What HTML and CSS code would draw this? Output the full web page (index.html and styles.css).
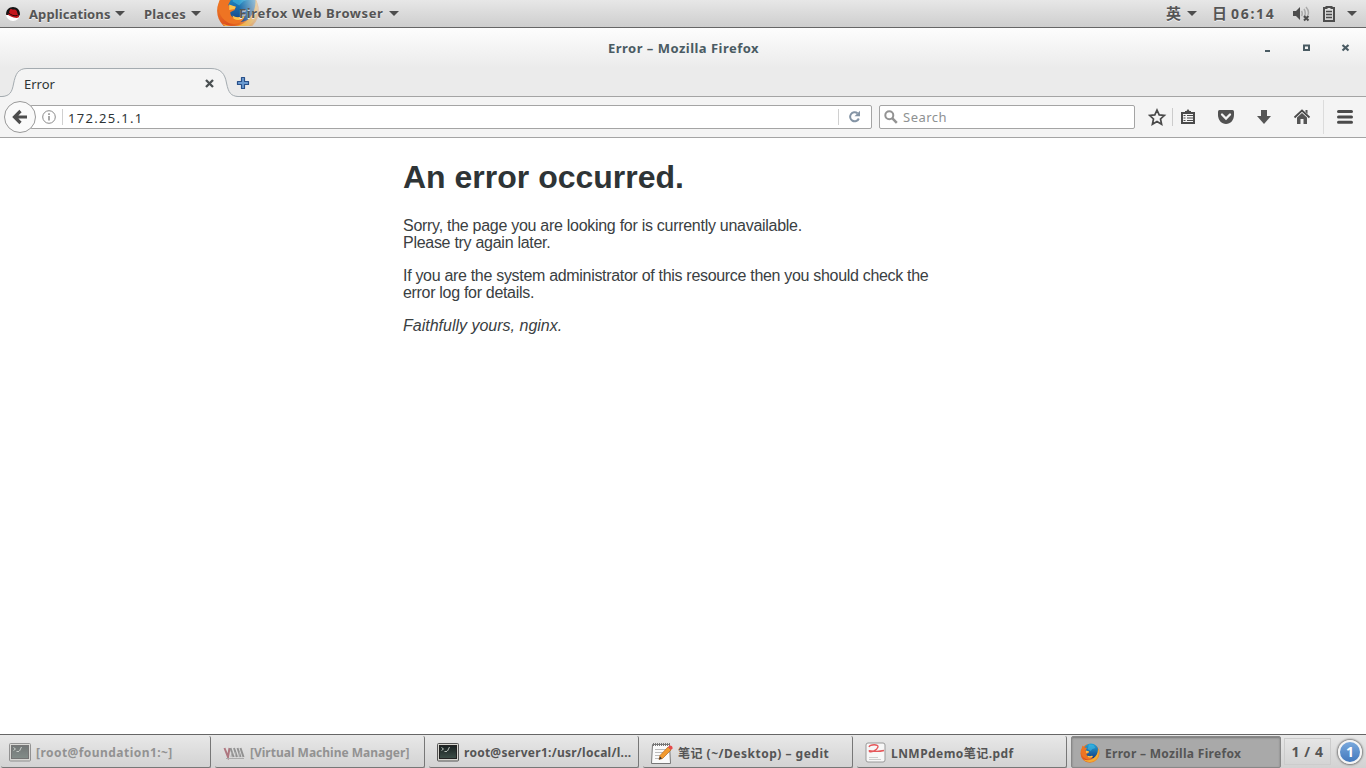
FILE: index.html
```
<!DOCTYPE html>
<html lang="en">
<head>
    <meta charset="UTF-8">
    <title>Error</title>
    <link rel="stylesheet" href="styles.css">
</head>
<body>

    <!-- Gradients shared by the icons -->
    <svg class="defs" width="0" height="0">
        <defs>
            <linearGradient id="fox" x1="0" y1="0" x2="1" y2="1">
                <stop offset="0" stop-color="#f08a2c"/>
                <stop offset=".55" stop-color="#dd4f1c"/>
                <stop offset="1" stop-color="#f6b93b"/>
            </linearGradient>
            <linearGradient id="globe" x1="0" y1="0" x2="0" y2="1">
                <stop offset="0" stop-color="#1fa5dc"/>
                <stop offset="1" stop-color="#173f82"/>
            </linearGradient>
            <linearGradient id="screen" x1="0" y1="0" x2="0" y2="1">
                <stop offset="0" stop-color="#182020"/>
                <stop offset="1" stop-color="#3d4f48"/>
            </linearGradient>
            <symbol id="firefox" viewBox="0 0 20 20">
                <circle cx="10" cy="10.300" r="9.500" fill="url(#fox)"/>
                <circle cx="11" cy="8" r="7.400" fill="url(#globe)"/>
                <path d="M9 1.500l4.500.500 2 3-3 1-2 2-3-2z" fill="#47c3ea" opacity=".5"/>
                <path d="M1 8l1.500-5.500L4 4.500l3 .300-1.500 3L9 8.500 8.500 10l-2 1c0 2.500 2.500 3 5 2l1.500 0c-1 3-4 4-7 3-3-1.500-5-4-5-8z" fill="#ee7423"/>
                <path d="M6 7.500l3 1-.500 1-2.500.500zM7.500 12.500q2 1.500 4 .300l1.500.200q-2 2.500-5 1z" fill="#fbc34b"/>
                <path d="M18 5c2 4 1 10-4 12.800-4 2-8 1.500-11-1.500 5 2 9.500 1 12.500-3 2-2.500 2.500-5 2.500-8.300z" fill="#f6ad33"/>
            </symbol>
            <symbol id="terminal" viewBox="0 0 22 19">
                <rect x=".5" y=".5" width="21" height="17.500" rx="1" fill="#d6d6d0" stroke="#555"/>
                <rect x="2.500" y="2.500" width="17" height="13" fill="url(#screen)" stroke="#222"/>
                <path d="M4.500 4.500l2 1.500-2 1.500M7.500 8.500h2.500M10.500 8l2-4" fill="none" stroke="#b8c0ba"/>
            </symbol>
        </defs>
    </svg>

    <!-- Top panel -->
    <div class="panel">
        <svg class="redhat" width="16" height="16" viewBox="0 0 16 16">
            <circle cx="8" cy="8" r="7" fill="#fff"/>
            <path d="M1.200 9C.5 4 4 1 8 1s7.300 3 7 7.500l-1.500 2.500L3 9z" fill="#151515"/>
            <path d="M3.800 8c.5-3 1.200-5.200 2-5.200 1 0 1.700 1 2.500.800 1.500-.500 3 .200 3.500 1.500l1 3.400c2 1.500 1.500 3.500-1.200 3.400C8 11.800 3 9.500 2.500 7.500z" fill="#c4161c"/>
            <path d="M4 7c1.500 2 5.500 3.500 8.500 2.500" fill="none" stroke="#2a0507"/>
        </svg>
        <span class="menu applications">Applications</span>
        <i class="arrow"></i>
        <span class="menu places">Places</span>
        <i class="arrow"></i>
        <div class="app-menu">
            <svg class="app-icon" width="44" height="26" viewBox="0 0 44 26">
                <defs>
                    <linearGradient id="fade"><stop offset=".5" stop-color="#fff"/><stop offset="1" stop-color="#fff" stop-opacity=".15"/></linearGradient>
                    <mask id="fade-mask"><rect width="46" height="30" fill="url(#fade)"/></mask>
                </defs>
                <g mask="url(#fade-mask)"><use href="#firefox" x="0" y="-12" width="44" height="44"/></g>
            </svg>
            <span class="menu app-name">Firefox Web Browser</span>
        </div>
        <i class="arrow"></i>

        <div class="status">
            <span class="lang">英</span>
            <i class="arrow"></i>
            <span class="day">日</span>
            <span class="clock">06:14</span>
            <svg class="volume" width="18" height="16" viewBox="0 0 18 16">
                <path d="M1 5h3l4-4v13l-4-4H1z" fill="#4d4d4d"/>
                <path d="M9.500 5q1.500 2.500 0 5M12 3q2.500 4 0 9M14 1q3.500 4 2 8" fill="none" stroke="#aaa" stroke-width="1.500"/>
                <path d="M12 10l4.500 4.500M16.500 10L12 14.500" stroke="#4d4d4d" stroke-width="2"/>
            </svg>
            <svg class="battery" width="12" height="16" viewBox="0 0 12 16">
                <path d="M3.500 2V1h5v1H11v13H1V2z" fill="none" stroke="#4d4d4d" stroke-width="2"/>
                <path d="M3 5.500h6M3 8.500h6M3 11.500h6" stroke="#4d4d4d" stroke-width="1.500"/>
            </svg>
            <i class="arrow"></i>
        </div>
    </div>

    <!-- Browser window -->
    <div class="titlebar">
        <span class="title">Error – Mozilla Firefox</span>
        <div class="controls">
            <svg width="100" height="10" viewBox="0 0 100 10">
                <path d="M4 7h5v2H4z" fill="#4a5b63"/>
                <path d="M43 2.500h5v4.500h-5z" fill="none" stroke="#4a5b63" stroke-width="2"/>
                <path d="M81.500 2l6 5.500M87.500 2l-6 5.500" stroke="#4a5b63" stroke-width="2.200"/>
            </svg>
        </div>
    </div>

    <div class="tabs">
        <div class="tab">
            <svg class="tab-shape" width="240" height="29" viewBox="0 0 240 29">
                <path d="M0 28.500h2C10 28 12 24 13.500 16 15.500 6 18 .5 27 .5H211C221 .5 225 6 226.500 15 228.500 25 231 28 238 28.500h2V29H0z" fill="#f4f4f4"/>
                <path d="M0 28.500h2C10 28 12 24 13.500 16 15.500 6 18 .5 27 .5H211C221 .5 225 6 226.500 15 228.500 25 231 28 238 28.500h2" fill="none" stroke="#a4abb0"/>
            </svg>
            <span class="tab-title">Error</span>
            <svg class="tab-close" width="9" height="9" viewBox="0 0 9 9"><path d="M1 1l7 7M8 1L1 8" stroke="#4a5052" stroke-width="2.300"/></svg>
        </div>
        <svg class="new-tab" width="14" height="14" viewBox="0 0 14 14">
            <path d="M5.500 1.500h3v4h4v3h-4v4h-3v-4h-4v-3h4z" fill="#6b9bd1" stroke="#29508a" stroke-width="1.200" stroke-linejoin="round"/>
        </svg>
    </div>

    <div class="toolbar">
        <div class="back">
            <svg width="16" height="16" viewBox="0 0 16 16"><path d="M8.500 2L2.500 8l6 6M3 8h12" fill="none" stroke="#4d4d4d" stroke-width="3.200"/></svg>
        </div>
        <div class="url">
            <svg class="info" width="14" height="14" viewBox="0 0 14 14">
                <circle cx="7" cy="7" r="6.300" fill="none" stroke="#8a8a8a"/>
                <path d="M7 6v4.500M7 3.200v1.700" stroke="#8a8a8a" stroke-width="1.500"/>
            </svg>
            <span class="address">172.25.1.1</span>
            <span class="reload">
                <svg width="13" height="13" viewBox="0 0 13 13"><path d="M9.500 3.300A4.500 4.500 0 1 0 10.800 8.500" fill="none" stroke="#8494a5" stroke-width="2"/><path d="M12 .8v5.400H6.500z" fill="#8494a5"/></svg>
            </span>
        </div>
        <div class="search">
            <svg width="14" height="14" viewBox="0 0 14 14"><circle cx="5.300" cy="5.200" r="4" fill="none" stroke="#939393" stroke-width="2"/><path d="M8.200 8.200l4.600 4.600" stroke="#939393" stroke-width="2.500"/></svg>
            <span class="placeholder">Search</span>
        </div>
        <div class="tools">
            <svg width="218" height="40" viewBox="0 0 218 40">
                <path d="M9 13l2.200 4.900 5.200.500-3.900 3.600 1.100 5.200L9 24.500l-4.600 2.700 1.100-5.200-3.900-3.600 5.200-.500z" fill="none" stroke="#4a4a4a" stroke-width="1.700"/>
                <path d="M24.500 11v18" stroke="#ccc"/>
                <path d="M34 16h12v10H34z" fill="none" stroke="#4a4a4a" stroke-width="2"/>
                <path d="M37 15.500V14h1.500l1.500-2 1.500 2H43v1.500z" fill="#4a4a4a"/>
                <path d="M35.500 18.500h2M39 18.500h6M35.500 21h2M39 21h6M35.500 23.500h2M39 23.500h6" stroke="#4a4a4a"/>
                <path d="M71.500 13h13q1.500 0 1.500 1.500V18c0 5-3.500 9-8 9s-8-4-8-9v-3.500q0-1.500 1.500-1.500z" fill="#525252"/>
                <path d="M74 17.500l4 4 4-4" fill="none" stroke="#f4f4f4" stroke-width="2.300" stroke-linecap="round"/>
                <path d="M113 13h6v6h4l-7 8-7-8h4z" fill="#555"/>
                <path d="M146.500 20.500l7.500-7 7.500 7" fill="none" stroke="#4a4a4a" stroke-width="1.800"/>
                <path d="M149 20.500l5-4.500 5 4.500V27h-3.500v-5h-3v5H149zM157.500 13h2v4l-2-2z" fill="#555"/>
                <path d="M175.500 3v34" stroke="#dcdcdc"/>
                <path d="M190.500 14.500h13M190.500 20h13M190.500 25.200h13" stroke="#4a4a4a" stroke-width="3" stroke-linecap="round"/>
            </svg>
        </div>
    </div>

    <!-- Page -->
    <div class="page">
        <div class="content">
            <h1>An error occurred.</h1>
            <p class="sorry">Sorry, the page you are looking for is currently unavailable.<br>
            Please try again later.</p>
            <p class="admin">If you are the system administrator of this resource then you should check the<br>
            error log for details.</p>
            <p class="sign"><em>Faithfully yours, nginx.</em></p>
        </div>
    </div>

    <!-- Window list -->
    <div class="taskbar">
        <div class="task minimized">
            <svg width="22" height="19"><use href="#terminal"/></svg>
            <span class="t1">[root@foundation1:~]</span>
        </div>
        <div class="task minimized">
            <svg width="22" height="14" viewBox="0 0 22 14">
                <path d="M1.500 2l3.500 9 1.500-9" fill="none" stroke="#8a2535" stroke-width="2"/>
                <path d="M7.500 2l3 9M11 2l3 9M14.500 2l3 9M17.500 2l3 9" stroke="#555" stroke-width="2"/>
                <path d="M8 11l1-5M12 11l1-5M16 11l.500-5M3 12.500h18" stroke="#888"/>
            </svg>
            <span class="t2">[Virtual Machine Manager]</span>
        </div>
        <div class="task">
            <svg width="22" height="19"><use href="#terminal"/></svg>
            <span class="t3">root@server1:/usr/local/l...</span>
        </div>
        <div class="task">
            <svg width="22" height="22" viewBox="0 0 22 22">
                <path d="M1.500 2.500h17l1 19H.5z" fill="#fafafa" stroke="#777"/>
                <path d="M2 2.500h17" stroke="#777" stroke-width="3" stroke-dasharray="1 1"/>
                <path d="M4 7.500h11M4 10.500h8M4 13.500h5M4 16.500h4" stroke="#bbb"/>
                <path d="M8 17.500l1-4L17 5l3 3-8.500 8.500z" fill="#f29a2e" stroke="#b5651d" stroke-width=".7"/>
                <path d="M17 5l1.500-1.500q3.500 0 3 3L20 8z" fill="#e54b4b"/>
                <path d="M8 17.500l1-3 2 2z" fill="#333"/>
            </svg>
            <span class="t4">笔记 (~/Desktop) – gedit</span>
        </div>
        <div class="task">
            <svg width="21" height="21" viewBox="0 0 21 21">
                <rect x="1" y="1" width="19" height="19" rx="2" fill="#f7f7f7" stroke="#999"/>
                <path d="M4 5c1-3 10-3 9 0-1 3-7 6-8.500 4.500C3 7 8 11 19 8.500" fill="none" stroke="#e5575a" stroke-width="1.300"/>
                <path d="M4 15.500h9M4 17.500h12" stroke="#ccc"/>
            </svg>
            <span class="t5">LNMPdemo笔记.pdf</span>
        </div>
        <div class="task active">
            <svg width="20" height="20"><use href="#firefox"/></svg>
            <span class="t6">Error – Mozilla Firefox</span>
        </div>
        <div class="workspace">1 / 4</div>
        <div class="badge">1</div>
    </div>

</body>
</html>
```
FILE: styles.css
```
* {
    box-sizing: border-box;
}

body {
    margin: 0;
    height: 768px;
    overflow: hidden;
    display: flex;
    flex-direction: column;
    background: #fff;
    color: #2e3436;
    font-family: "Noto Sans", "Noto Sans CJK SC", sans-serif;
    font-size: 13px;
    white-space: nowrap;
}

svg {
    display: block;
    flex: none;
}

.defs {
    position: absolute;
}

/* Top panel */
.panel {
    flex: none;
    height: 28px;
    display: flex;
    align-items: center;
    padding-left: 5px;
    background: linear-gradient(#e7e7e7, #cecece);
    border-bottom: 1px solid #666;
    color: #555;
    font-weight: bold;
    text-shadow: 0 1px #eee;
}

.arrow {
    flex: none;
    border: 5px solid transparent;
    border-top-color: #4d4d4d;
    border-bottom: 0;
}

.menu {
    flex: none;
    line-height: 26px;
}

.applications {
    width: 86px;
    margin-left: 8px;
    letter-spacing: .1px;
}

.places {
    width: 47px;
    margin-left: 19px;
    letter-spacing: .2px;
}

.app-menu {
    width: 173px;
    height: 27px;
    margin-left: 15px;
    display: flex;
}

.app-icon {
    margin-right: -21px;
}

.app-name {
    position: relative;
    line-height: 27px;
    letter-spacing: .6px;
}

.status {
    display: flex;
    align-items: center;
    margin-left: auto;
    padding-right: 9px;
}

.lang {
    width: 21px;
    font-size: 15px;
    line-height: 25px;
}

.day {
    width: 19px;
    margin-left: 15px;
    font-size: 15px;
    line-height: 25px;
}

.clock {
    width: 46px;
    font-size: 14px;
    letter-spacing: 1.7px;
}

.volume {
    margin-left: 15px;
}

.battery {
    margin-left: 13px;
    margin-right: 12px;
}

/* Window title and tabs */
.titlebar {
    flex: none;
    height: 40px;
    display: flex;
    align-items: center;
    justify-content: flex-end;
    background: linear-gradient(#fdfdfd, #ebebeb);
}

.title {
    width: 151px;
    margin-right: 502px;
    color: #4a5b63;
    font-weight: bold;
    letter-spacing: .48px;
}

.controls {
    width: 105px;
}

.tabs {
    flex: none;
    height: 29px;
    display: flex;
    background: linear-gradient(#a4a4a4, #a4a4a4) 0 28px / 100% 1px no-repeat #ebebeb;
}

.tab {
    width: 236px;
    position: relative;
    display: flex;
    padding: 0 0 0 24px;
}

.tab-shape {
    position: absolute;
    left: 0;
    top: 0;
}

.tab-title {
    position: relative;
    width: 181px;
    line-height: 32px;
}

.tab-close {
    position: relative;
    margin-top: 11px;
}

.new-tab {
    margin-top: 8px;
}

/* Toolbar */
.toolbar {
    flex: none;
    height: 41px;
    display: flex;
    align-items: center;
    padding-left: 4px;
    background: #f4f4f4;
    border-bottom: 1px solid #a4a4a4;
}

.back {
    z-index: 1;
    width: 32px;
    height: 32px;
    display: flex;
    align-items: center;
    justify-content: center;
    background: #fafafa;
    border: 1px solid #999;
    border-radius: 50%;
}

.url {
    width: 842px;
    height: 24px;
    margin-left: -6px;
    display: flex;
    align-items: center;
    padding-left: 11px;
    background: #fff;
    border: 1px solid #a4a4a4;
    border-radius: 2px;
}

.address {
    flex: 1;
    height: 16px;
    margin-left: 6px;
    padding-left: 5px;
    border-left: 1px solid #d0d0d0;
    line-height: 18px;
    letter-spacing: 1.3px;
}

.reload {
    width: 33px;
    height: 16px;
    padding: 1px 0 0 9px;
    border-left: 1px solid #d0d0d0;
}

.search {
    width: 256px;
    height: 24px;
    margin-left: 7px;
    display: flex;
    align-items: center;
    gap: 5px;
    padding-left: 4px;
    background: #fff;
    border: 1px solid #a4a4a4;
    border-radius: 2px;
    color: #8e9192;
}

.placeholder {
    line-height: 24px;
    letter-spacing: .5px;
}

.tools {
    margin-left: 13px;
}

/* Page */
.page {
    flex: 1;
    padding-top: 21px;
}

.content {
    width: 560px;
    margin: 0 auto;
    font-family: "Liberation Sans", Arial, sans-serif;
    font-size: 16px;
    line-height: 17px;
}

.content h1 {
    margin: 0 0 21px;
    font-size: 32px;
    line-height: 37px;
}

.content p {
    margin: 0 0 16px;
    color: #3a4042;
}

.content .sorry {
    letter-spacing: -.28px;
}

.content .admin {
    letter-spacing: -.31px;
}

/* Window list */
.taskbar {
    flex: none;
    height: 34px;
    display: flex;
    padding-left: 1px;
    background: linear-gradient(#e8e8e8, #d2d2d2);
    border-top: 1px solid #666;
    color: #555;
    font-size: 12px;
    font-weight: bold;
}

.task {
    width: 210px;
    height: 32px;
    margin: 1px 4px 0 0;
    flex: none;
    display: flex;
    align-items: center;
    gap: 5px;
    padding: 2px 0 0 8px;
    border-right: 1px solid #777;
    border-bottom: 1px solid #777;
    border-radius: 2px;
}

.minimized {
    color: #929292;
}

.minimized svg {
    opacity: .55;
}

.t1 {
    letter-spacing: .45px;
}

.t3 {
    letter-spacing: .26px;
}

.t4 {
    letter-spacing: .5px;
}

.t5 {
    letter-spacing: .45px;
}

.t6 {
    letter-spacing: .3px;
}

.active {
    margin-right: 3px;
    background: #a9a9a9;
    border: 1px solid #888;
    box-shadow: inset 0 1px 2px #777;
}

.workspace {
    width: 47px;
    height: 27px;
    margin: 3px 0 0 0;
    border: 1px solid #ccc;
    font-size: 14px;
    line-height: 26px;
    letter-spacing: .6px;
    text-align: center;
}

.badge {
    width: 24px;
    height: 24px;
    margin: 5px 0 0 7px;
    border: 2px solid #f5f5f5;
    border-radius: 50%;
    background: linear-gradient(#79a8dc, #4379bd);
    box-shadow: 0 0 2px 1px #777;
    color: #fff;
    font-size: 14px;
    line-height: 20px;
    text-align: center;
}
```
